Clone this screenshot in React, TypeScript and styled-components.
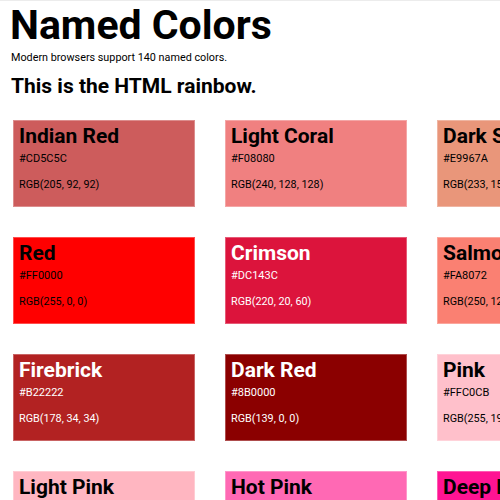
import React from "react";
import styled, { createGlobalStyle } from "styled-components";

const Global = createGlobalStyle`
  html, body { margin: 0; padding: 0; overflow: hidden; background: #fff; }
  body { font-family: Roboto, "Liberation Sans", Arial, sans-serif; color: #000; }
`;

const Page = styled.div`
  border-top: 1px solid #ececec;
  padding: 2px 0 0 10px;
`;

const Title = styled.h1`
  margin: 0;
  font-size: 41px;
  line-height: 44px;
  font-weight: 700;
`;

const Subtitle = styled.p`
  margin: 4px 0 0 1px;
  font-size: 10.8px;
  line-height: 14px;
`;

const Heading = styled.h2`
  margin: 8px 0 0 1px;
  font-size: 21px;
  line-height: 26px;
  font-weight: 700;
`;

const Grid = styled.div`
  margin: 21px 0 0 13px;
  display: grid;
  grid-template-columns: repeat(4, 182px);
  grid-auto-rows: 87px;
  gap: 30px;
  width: max-content;
`;

const Card = styled.div<{ $bg: string; $light: boolean }>`
  box-sizing: border-box;
  background: ${(p) => p.$bg};
  color: ${(p) => (p.$light ? "#fff" : "#000")};
  border: 1px solid rgba(255, 255, 255, 0.3);
  padding: 3px 5px;
  display: flex;
  flex-direction: column;
  overflow: hidden;
`;

const Name = styled.div`
  font-size: 21px;
  line-height: 24px;
  font-weight: 700;
  white-space: nowrap;
`;

const Hex = styled.div`
  margin-top: 4px;
  font-size: 11px;
  line-height: 14px;
`;

const Rgb = styled.div`
  margin-top: 12px;
  font-size: 10.8px;
  line-height: 14px;
`;

type C = { name: string; hex: string; light?: boolean };

const colors: C[] = [
  { name: "Indian Red", hex: "#CD5C5C" },
  { name: "Light Coral", hex: "#F08080" },
  { name: "Dark Salmon", hex: "#E9967A" },
  { name: "Light Salmon", hex: "#FFA07A" },
  { name: "Red", hex: "#FF0000" },
  { name: "Crimson", hex: "#DC143C", light: true },
  { name: "Salmon", hex: "#FA8072" },
  { name: "Coral", hex: "#FF7F50" },
  { name: "Firebrick", hex: "#B22222", light: true },
  { name: "Dark Red", hex: "#8B0000", light: true },
  { name: "Pink", hex: "#FFC0CB" },
  { name: "Tomato", hex: "#FF6347" },
  { name: "Light Pink", hex: "#FFB6C1" },
  { name: "Hot Pink", hex: "#FF69B4" },
  { name: "Deep Pink", hex: "#FF1493" },
  { name: "Orange Red", hex: "#FF4500" },
];

const toRgb = (hex: string) => {
  const n = parseInt(hex.slice(1), 16);
  return `RGB(${(n >> 16) & 255}, ${(n >> 8) & 255}, ${n & 255})`;
};

export default function App() {
  return (
    <>
      <Global />
      <Page>
        <Title>Named Colors</Title>
        <Subtitle>Modern browsers support 140 named colors.</Subtitle>
        <Heading>This is the HTML rainbow.</Heading>
      </Page>
      <Grid>
        {colors.map((c) => (
          <Card key={c.hex} $bg={c.hex} $light={!!c.light}>
            <Name>{c.name}</Name>
            <Hex>{c.hex}</Hex>
            <Rgb>{toRgb(c.hex)}</Rgb>
          </Card>
        ))}
      </Grid>
    </>
  );
}
